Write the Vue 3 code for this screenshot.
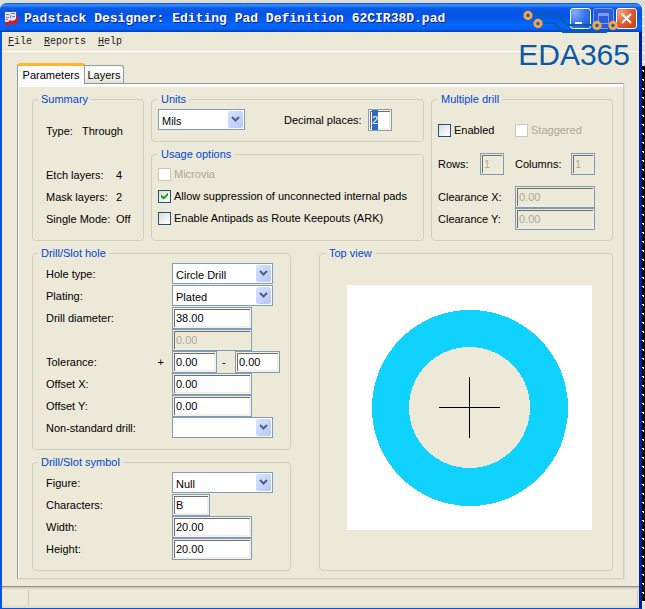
<script setup>
import { onMounted, reactive, ref } from 'vue'

const form = reactive({
  units: 'Mils',
  decimals: '2',
  microvia: false,
  suppress: true,
  antipads: false,
  multiple: false,
  staggered: false,
  rows: '1',
  columns: '1',
  clearanceX: '0.00',
  clearanceY: '0.00',
  holeType: 'Circle Drill',
  plating: 'Plated',
  diameter: '38.00',
  slotSize: '0.00',
  tolPlus: '0.00',
  tolMinus: '0.00',
  offsetX: '0.00',
  offsetY: '0.00',
  nonStandard: '',
  figure: 'Null',
  characters: 'B',
  width: '20.00',
  height: '20.00',
})

const decimalsBox = ref(null)
onMounted(() => {
  decimalsBox.value.focus()
  decimalsBox.value.select()
})
</script>

<template>
  <div class="desktop">
    <div class="window">
      <header class="titlebar">
        <svg class="app-icon" viewBox="0 0 16 16" width="16" height="16" aria-hidden="true">
          <rect x="0" y="0" width="13" height="12" fill="#4a4f9c" />
          <rect x="1" y="1" width="11" height="10" fill="#e4e6f6" />
          <path d="M2 3h3v1H2zM7 2h4v1H7zM6 4h1v3H6zM8 5h3v1H8zM2 6h3v1H2zM2 8h2v1H2z" fill="#7078b8" />
          <path d="M1 13l3-2 2-2 2 1 3-1 2-3 3-1-2 3-1 2 2 2-3 0-2 3-1-2-3 0-3 3-1-1z" fill="#dc1820" />
        </svg>
        <h1>Padstack Designer: Editing Pad Definition 62CIR38D.pad</h1>
        <div class="controls">
          <button type="button" class="ctl" aria-label="Minimize">
            <svg viewBox="0 0 19 19" width="19" height="19"><rect x="4" y="13" width="7" height="3" fill="#fff" /></svg>
          </button>
          <button type="button" class="ctl" aria-label="Maximize" disabled>
            <svg viewBox="0 0 19 19" width="19" height="19"><path d="M4 4h11v11H4zM5 7v7h9V7z" fill="#7f9df0" fill-rule="evenodd" /></svg>
          </button>
          <button type="button" class="ctl close" aria-label="Close">
            <svg viewBox="0 0 19 19" width="19" height="19"><path d="M5 5l9 9M14 5l-9 9" stroke="#fff" stroke-width="2" /></svg>
          </button>
        </div>
      </header>

      <nav class="menu">
        <button type="button"><u>F</u>ile</button>
        <button type="button"><u>R</u>eports</button>
        <button type="button"><u>H</u>elp</button>
      </nav>

      <main class="body">
        <div class="tabs" role="tablist">
          <button type="button" role="tab" aria-selected="true" class="tab active">Parameters</button>
          <button type="button" role="tab" aria-selected="false" class="tab">Layers</button>
        </div>

        <div class="panel">
          <div class="top">
            <fieldset class="summary">
              <legend>Summary</legend>
              <dl class="type"><dt>Type:</dt><dd>Through</dd></dl>
              <dl class="counts">
                <dt>Etch layers:</dt><dd>4</dd>
                <dt>Mask layers:</dt><dd>2</dd>
                <dt>Single Mode:</dt><dd>Off</dd>
              </dl>
            </fieldset>

            <div class="stack">
              <fieldset class="units">
                <legend>Units</legend>
                <div class="select unit-select">
                  <select v-model="form.units" aria-label="Units"><option>Mils</option><option>Millimeter</option></select>
                  <svg viewBox="0 0 15 17" width="15" height="17"><path d="M4 6l3.5 3.5L11 6" /></svg>
                </div>
                <label for="decimals">Decimal places:</label>
                <input id="decimals" ref="decimalsBox" v-model="form.decimals" class="tiny" type="text" />
              </fieldset>

              <fieldset class="usage">
                <legend>Usage options</legend>
                <label class="check off"><input v-model="form.microvia" type="checkbox" disabled />Microvia</label>
                <label class="check"><input v-model="form.suppress" type="checkbox" />Allow suppression of unconnected internal pads</label>
                <label class="check"><input v-model="form.antipads" type="checkbox" />Enable Antipads as Route Keepouts (ARK)</label>
              </fieldset>
            </div>

            <fieldset class="multiple">
              <legend>Multiple drill</legend>
              <div class="pair">
                <label class="check"><input v-model="form.multiple" type="checkbox" />Enabled</label>
                <label class="check off"><input v-model="form.staggered" type="checkbox" disabled />Staggered</label>
              </div>
              <div class="pair spaced">
                <div class="count rows">
                  <label for="rows">Rows:</label>
                  <input id="rows" v-model="form.rows" class="tiny" type="text" disabled />
                </div>
                <div class="count">
                  <label for="columns">Columns:</label>
                  <input id="columns" v-model="form.columns" class="tiny" type="text" disabled />
                </div>
              </div>
              <div class="pair">
                <label for="clx">Clearance X:</label>
                <input id="clx" v-model="form.clearanceX" type="text" disabled />
                <label for="cly">Clearance Y:</label>
                <input id="cly" v-model="form.clearanceY" type="text" disabled />
              </div>
            </fieldset>
          </div>

          <div class="bottom">
            <div class="stack">
              <fieldset class="form">
                <legend>Drill/Slot hole</legend>
                <label for="hole">Hole type:</label>
                <div class="select">
                  <select id="hole" v-model="form.holeType"><option>Circle Drill</option><option>Oval Slot</option></select>
                  <svg viewBox="0 0 15 17" width="15" height="17"><path d="M4 6l3.5 3.5L11 6" /></svg>
                </div>
                <label for="plating">Plating:</label>
                <div class="select">
                  <select id="plating" v-model="form.plating"><option>Plated</option><option>Non-Plated</option></select>
                  <svg viewBox="0 0 15 17" width="15" height="17"><path d="M4 6l3.5 3.5L11 6" /></svg>
                </div>
                <label for="diameter">Drill diameter:</label>
                <input id="diameter" v-model="form.diameter" type="text" />
                <input v-model="form.slotSize" class="second" type="text" aria-label="Slot size Y" disabled />
                <label for="tolp" class="tol">Tolerance:<span>+</span></label>
                <div class="range">
                  <input id="tolp" v-model="form.tolPlus" type="text" />
                  <span>-</span>
                  <input v-model="form.tolMinus" type="text" aria-label="Negative tolerance" />
                </div>
                <label for="offx">Offset X:</label>
                <input id="offx" v-model="form.offsetX" type="text" />
                <label for="offy">Offset Y:</label>
                <input id="offy" v-model="form.offsetY" type="text" />
                <label for="nonstd">Non-standard drill:</label>
                <div class="select">
                  <select id="nonstd" v-model="form.nonStandard"><option></option><option>Laser</option></select>
                  <svg viewBox="0 0 15 17" width="15" height="17"><path d="M4 6l3.5 3.5L11 6" /></svg>
                </div>
              </fieldset>

              <fieldset class="form">
                <legend>Drill/Slot symbol</legend>
                <label for="figure">Figure:</label>
                <div class="select">
                  <select id="figure" v-model="form.figure"><option>Null</option><option>Circle</option></select>
                  <svg viewBox="0 0 15 17" width="15" height="17"><path d="M4 6l3.5 3.5L11 6" /></svg>
                </div>
                <label for="chars">Characters:</label>
                <input id="chars" v-model="form.characters" class="short" type="text" />
                <label for="width">Width:</label>
                <input id="width" v-model="form.width" type="text" />
                <label for="height">Height:</label>
                <input id="height" v-model="form.height" type="text" />
              </fieldset>
            </div>

            <fieldset class="view">
              <legend>Top view</legend>
              <svg viewBox="0 0 245 245" shape-rendering="crispEdges" role="img" aria-label="Pad top view">
                <rect width="245" height="245" fill="#fff" />
                <circle cx="123" cy="123" r="98" fill="#10d2ff" />
                <circle cx="122.5" cy="122.5" r="60.5" fill="#ece9d8" />
                <path d="M92 122h61v1H92zM122 92h1v61h-1z" fill="#000" />
              </svg>
            </fieldset>
          </div>
        </div>
      </main>

      <footer class="status"><span></span><span></span></footer>

      <div class="brand">
        <svg viewBox="0 0 110 26" width="110" height="26" aria-hidden="true">
          <g fill="none" stroke="#0a5cae" stroke-width="2">
            <path d="M12 5h27l10 10h25M23 13h13l9 9h43l5-5" />
          </g>
          <g fill="#0b5be0" stroke="#f4a63a" stroke-width="3">
            <circle cx="10" cy="5.5" r="3.2" /><circle cx="20" cy="13.5" r="3.2" />
            <circle cx="79" cy="15.5" r="3.2" /><circle cx="95" cy="15.5" r="3.2" />
          </g>
        </svg>
        <span>EDA365</span>
      </div>
    </div>
  </div>
</template>

<style>
body {
  background: #dfdfdc;
}
</style>

<style scoped>
* {
  box-sizing: border-box;
}
.desktop {
  display: flex;
  min-height: 100vh;
  padding: 3px 3px 0 0;
  background:
    radial-gradient(circle, #fff 1px, transparent 1px) right 66px / 3px 9px repeat-y,
    linear-gradient(#dcdcd8 66px, #000 66px calc(100% - 8px), #e4e4e0 calc(100% - 8px));
  font: 11px/22px "Liberation Sans", sans-serif;
  color: #000;
}
.window {
  position: relative;
  flex: 1;
  min-width: 0;
  display: flex;
  flex-direction: column;
  border: solid #0831d9;
  border-color: #0855dd #001ea0 #0855dd #0855dd;
  border-width: 0 3px 1px 2px;
  border-radius: 7px 7px 0 0;
  background: #ece9d8;
}
button,
input,
select {
  font: inherit;
  color: inherit;
  margin: 0;
}
.titlebar {
  display: flex;
  align-items: center;
  height: 29px;
  margin: 0 -3px 0 -2px;
  padding: 2px 5px 0 4px;
  border-radius: 7px 7px 0 0;
  background: linear-gradient(#0a50d8, #3c93ff 2px, #0a5be8 5px, #0353e4 12px, #0566fc 22px, #0261f8 26px, #0040b8);
}
h1 {
  flex: 1;
  margin: 0 0 0 4px;
  white-space: nowrap;
  font: bold 13px/18px "Liberation Mono", monospace;
  color: #fff;
  text-shadow: 1px 1px 0 #0a1f8c;
}
.controls {
  display: flex;
  gap: 2px;
}
.ctl {
  display: block;
  width: 21px;
  height: 21px;
  padding: 0;
  border: 1px solid #fff;
  border-radius: 3px;
  background: radial-gradient(circle at 20% 20%, #86adf8, #3a73ec 50%, #1b50dc);
}
.ctl svg {
  display: block;
}
.ctl:disabled {
  border-color: #7a9df0;
  background: #2d59dc;
}
.ctl.close {
  background: radial-gradient(circle at 20% 20%, #f2a184, #e25a34 50%, #c8391a);
}
.menu {
  display: flex;
  gap: 12px;
  height: 20px;
  padding: 0 6px;
  border-bottom: 1px solid #fff;
}
.menu button {
  padding: 0;
  border: 0;
  background: none;
  font: 10px/19px "Liberation Mono", monospace;
  color: #222;
}
.body {
  padding: 11px 15px 7px;
}
.tabs {
  display: flex;
  align-items: flex-end;
  height: 20px;
}
.tab {
  min-width: 39px;
  height: 18px;
  padding: 0 2px;
  border: 1px solid #919b9c;
  border-bottom: 0;
  border-left: 0;
  border-radius: 0 3px 0 0;
  background: linear-gradient(#fff, #f4f3ec 70%, #e0dfd2);
  line-height: 18px;
}
.tab.active {
  min-width: 68px;
  height: 21px;
  margin-bottom: -1px;
  border-left: 1px solid #919b9c;
  border-top: 3px solid #ffb52e;
  border-radius: 3px 3px 0 0;
  background: #fcfcfe;
  line-height: 15px;
}
.panel {
  display: flex;
  flex-direction: column;
  gap: 5px;
  padding: 8px 10px 7px 14px;
  border: 1px solid #919b9c;
  border-color: #919b9c #d0d0bf #d0d0bf #919b9c;
  box-shadow: inset 0 3px 0 #fcfcfe, inset 1px 0 0 #fcfcfe, 1px 1px 0 #e3e0d0;
}
.top {
  display: grid;
  grid-template-columns: 112px minmax(0, 1fr) 182px;
  gap: 7px;
}
.bottom {
  display: grid;
  grid-template-columns: 259px minmax(0, 1fr);
  gap: 28px;
}
.stack {
  display: flex;
  flex-direction: column;
  gap: 5px;
}
fieldset {
  min-width: 0;
  margin: 0;
  padding: 3px 6px 10px;
  border: 1px solid #d0d0bf;
  border-radius: 4px;
}
legend {
  padding: 0 3px;
  line-height: 14px;
  color: #0046d5;
}
.summary {
  padding: 14px 13px 10px;
}
.summary legend {
  margin-left: -8px;
}
dl,
dd {
  margin: 0;
}
.type {
  display: flex;
  gap: 9px;
  margin-bottom: 22px;
}
.counts {
  display: grid;
  grid-template-columns: 70px 1fr;
}
.counts dt {
  white-space: nowrap;
}
.units {
  display: flex;
  align-items: flex-start;
}
.units label {
  flex: none;
  width: 84px;
  margin-left: 39px;
  white-space: nowrap;
}
.usage {
  padding: 2px 6px 11px;
}
.check {
  display: flex;
  align-items: center;
  gap: 3px;
  white-space: nowrap;
}
.off {
  color: #aca899;
}
.check input {
  flex: none;
  appearance: none;
  display: grid;
  width: 13px;
  height: 13px;
  border: 1px solid #1c5180;
  background: linear-gradient(135deg, #dcdcd7, #fff);
}
.check input:disabled {
  border-color: #cac8bb;
  background: #fff;
}
.check input:checked::after {
  content: "";
  margin: 2px;
  background: #21a121;
  clip-path: polygon(0 28%, 40% 60%, 100% 0, 100% 42%, 40% 100%, 0 70%);
}
input[type="text"] {
  width: 80px;
  height: 22px;
  padding: 0 2px 0 3px;
  border: 1px solid #7f9db9;
  border-radius: 0;
  outline: 0;
  background: #fff;
  box-shadow: inset 0 0 0 1px #f4f2e8, inset 2px 2px 0 #716f64, inset -2px -2px 0 #f1efe2;
}
input[type="text"]:disabled {
  background: #ece9d8;
  color: #aca899;
  box-shadow: inset 0 0 0 1px #ece9d8, inset 2px 2px 0 #716f64, inset -2px -2px 0 #f1efe2;
}
input[type="text"].tiny {
  width: 24px;
}
input[type="text"].short {
  width: 38px;
}
input::selection {
  background: #316ac5;
  color: #fff;
}
.multiple {
  padding: 13px 6px 10px;
}
.pair {
  display: grid;
  grid-template-columns: 77px 80px;
}
.spaced {
  margin: 12px 0 11px;
}
.count {
  display: flex;
  justify-content: space-between;
}
.rows {
  margin-right: 11px;
}
.form {
  display: grid;
  grid-template-columns: 126px 1fr;
  grid-auto-rows: 22px;
  padding: 3px 10px 10px 13px;
}
.form legend {
  margin-left: -8px;
}
.second {
  grid-column: 2;
}
.tol {
  display: flex;
  justify-content: space-between;
  padding-right: 8px;
}
.range {
  display: flex;
}
.range span {
  width: 18px;
  padding-left: 5px;
}
.range input[type="text"] {
  width: 45px;
}
.select {
  display: grid;
  width: 101px;
  height: 21px;
}
.unit-select {
  width: 87px;
}
.select > * {
  grid-area: 1 / 1;
}
.select select {
  appearance: none;
  width: 100%;
  height: 21px;
  padding: 0 18px 0 3px;
  border: 1px solid #7f9db9;
  border-radius: 0;
  background: #fff;
}
.select svg {
  justify-self: end;
  margin: 2px;
  border-radius: 2px;
  background: linear-gradient(135deg, #d8e3fd, #b4c8f8);
  pointer-events: none;
}
.select path {
  fill: none;
  stroke: #4d6185;
  stroke-width: 2;
}
.view {
  padding: 25px 20px 40px 27px;
}
.view legend {
  margin-left: -21px;
}
.view svg {
  display: block;
  width: 100%;
}
.status {
  display: flex;
  flex: 1;
  justify-content: space-between;
  min-height: 22px;
  padding: 3px 1px 2px 26px;
  border-top: 1px solid #918f80;
  background: linear-gradient(#c9c6b4, #ece9d8 3px, #ece9d8 17px, #dedbc8);
}
.status span {
  width: 1px;
  background: #cfccba;
}
.brand {
  position: absolute;
  top: 7px;
  right: 9px;
  display: flex;
  flex-direction: column;
  gap: 2px;
  pointer-events: none;
}
.brand svg {
  overflow: visible;
}
.brand span {
  font: 30px/34px "Liberation Sans", sans-serif;
  color: #0a59a8;
}
</style>
